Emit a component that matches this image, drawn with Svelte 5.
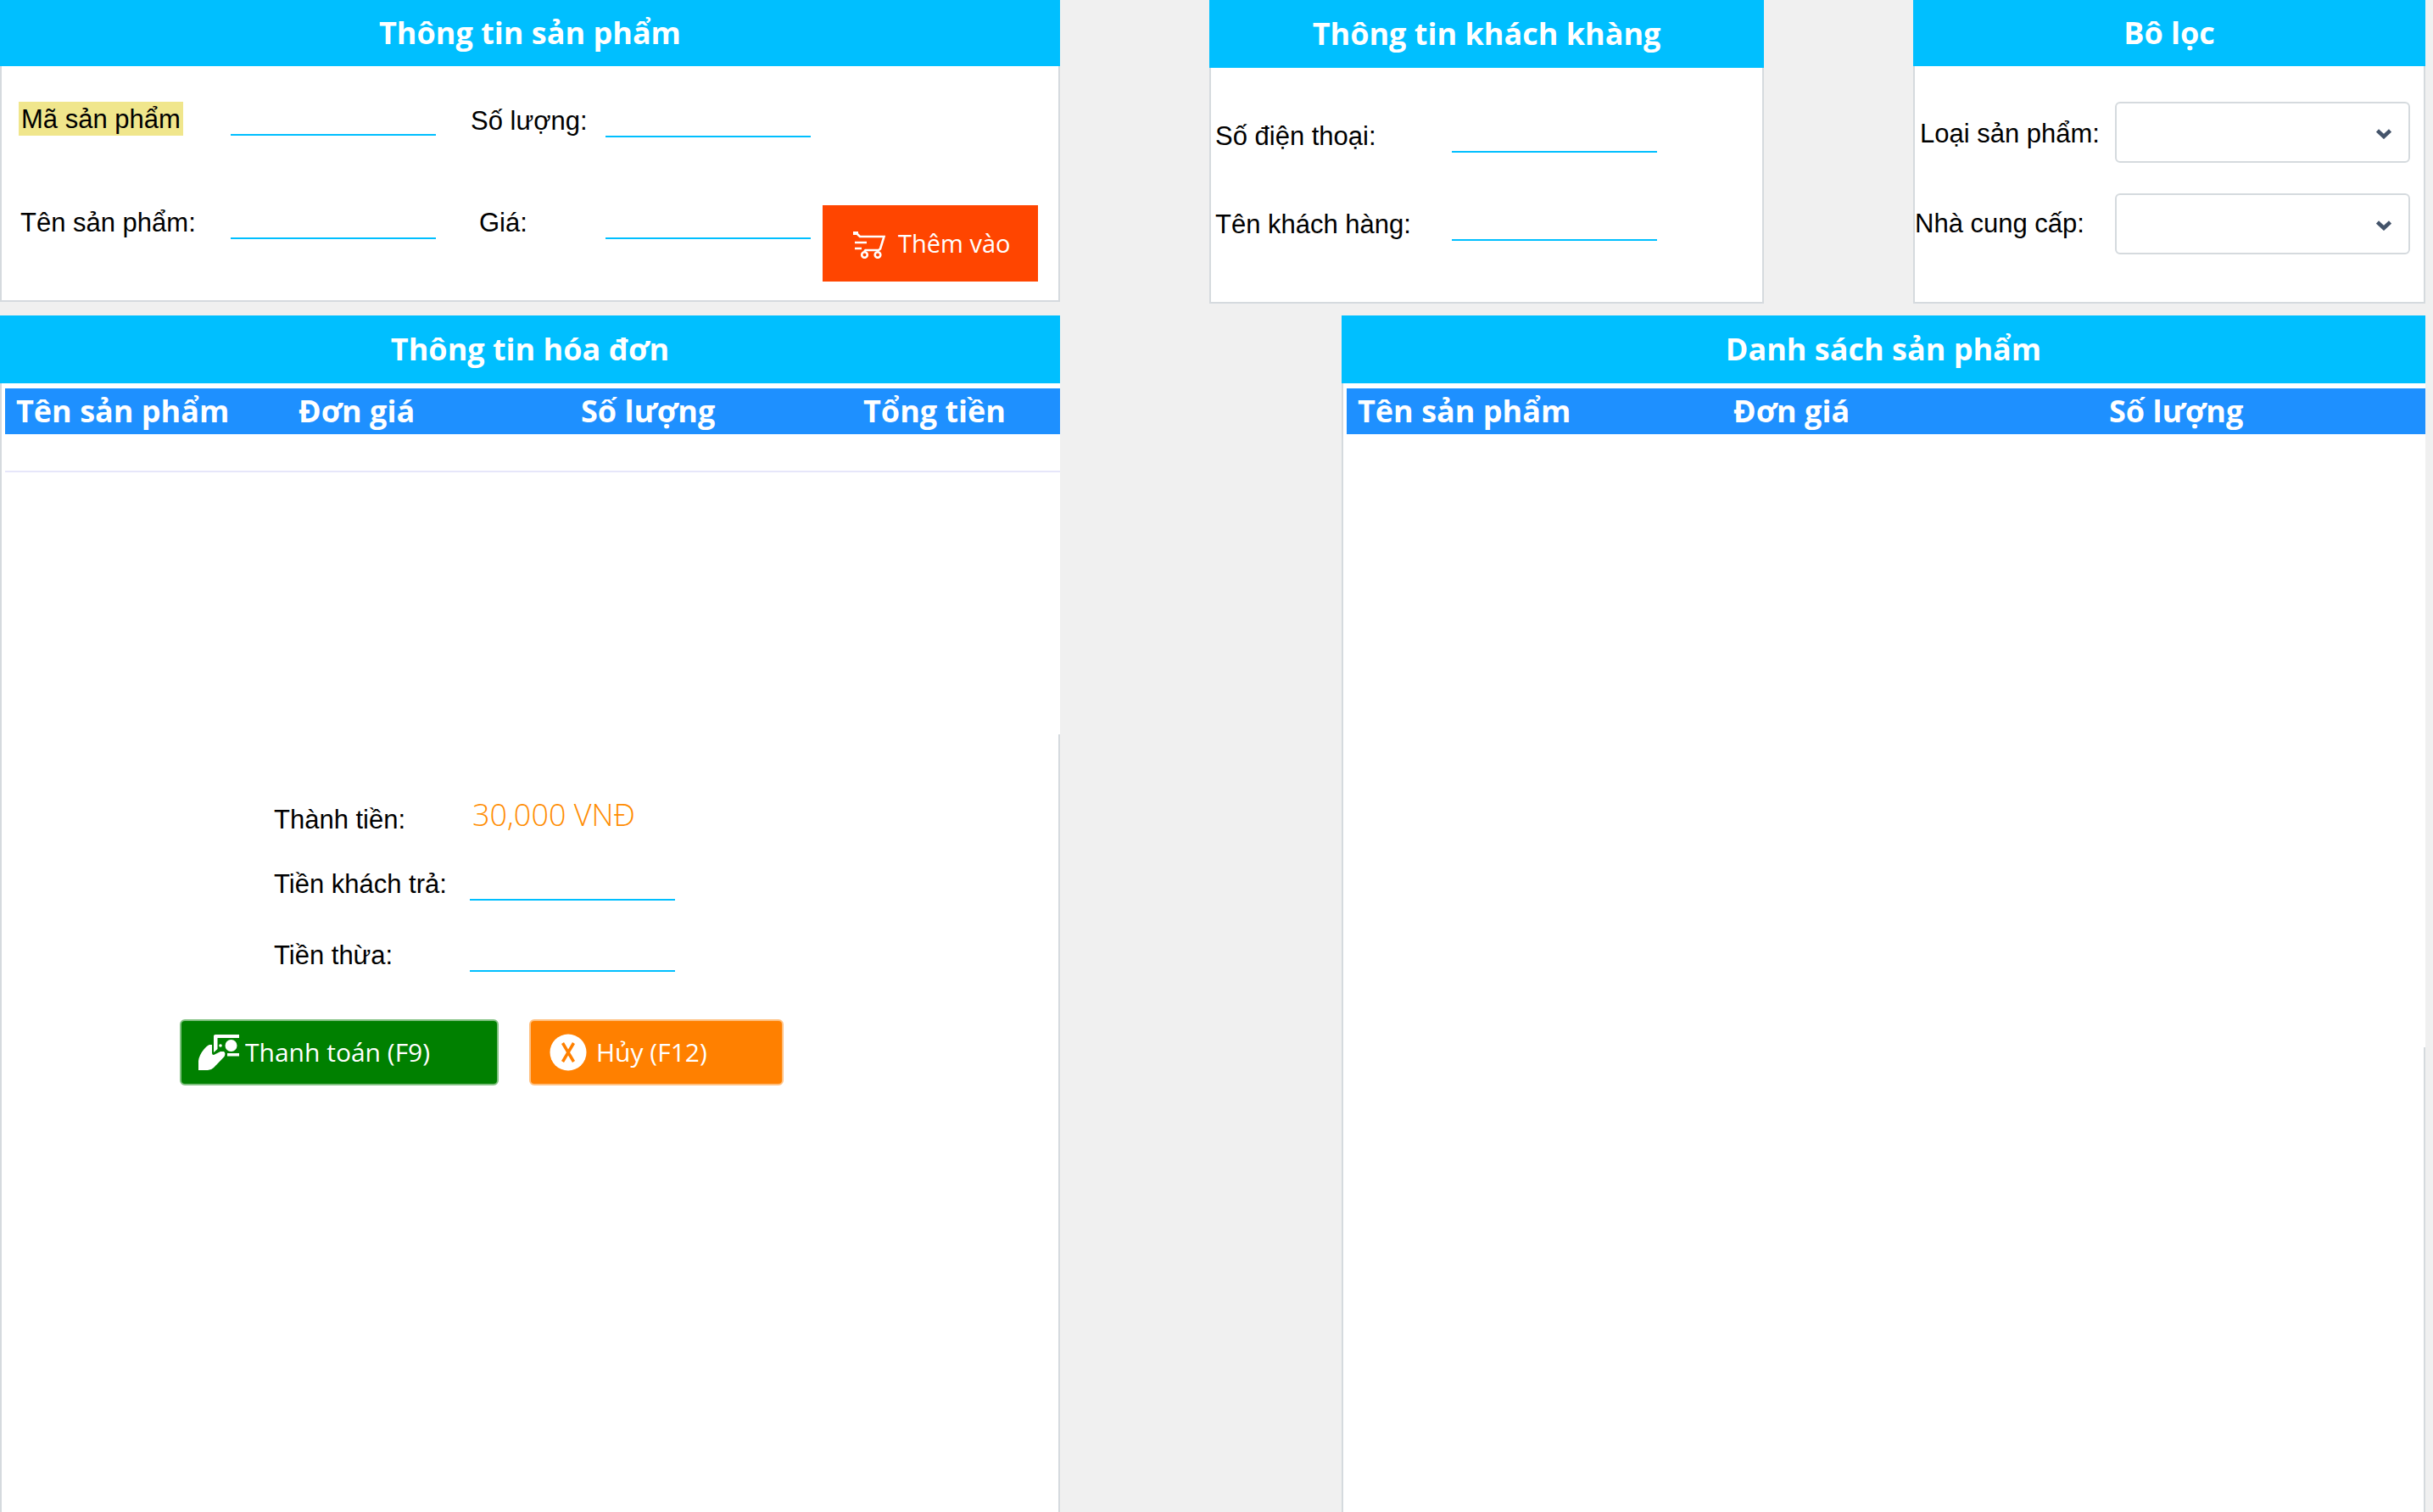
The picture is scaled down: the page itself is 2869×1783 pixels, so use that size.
<script>
  const billColumns = ['Tên sản phẩm', 'Đơn giá', 'Số lượng', 'Tổng tiền'];
  const productColumns = ['Tên sản phẩm', 'Đơn giá', 'Số lượng'];
</script>

{#snippet chevron()}
  <svg class="chevron" viewBox="0 0 18 12" aria-hidden="true">
    <path d="M1.5 2 9 9 16.500 2" fill="none" stroke="#44546a" stroke-width="4.500" />
  </svg>
{/snippet}

<main>
  <div class="top">
    <section class="card product">
      <h2>Thông tin sản phẩm</h2>
      <form class="body">
        <div class="fields">
          <div class="field">
            <label for="code"><mark>Mã sản phẩm</mark></label>
            <input id="code" type="text" />
          </div>
          <div class="field">
            <label for="name">Tên sản phẩm:</label>
            <input id="name" type="text" />
          </div>
        </div>
        <div class="fields amounts">
          <div class="field">
            <label for="quantity">Số lượng:</label>
            <input id="quantity" type="text" />
          </div>
          <div class="field price">
            <label for="price">Giá:</label>
            <input id="price" type="text" />
          </div>
        </div>
        <button type="button" class="add">
          <svg width="38" height="32" viewBox="0 0 38 32" fill="none" stroke="#fff" aria-hidden="true">
            <path d="M0 2h6" stroke-width="4" />
            <path d="M5 3 8 6H36.500L32 20.500 30 22H14.500L13 24" stroke-width="2.600" />
            <path d="M2 13H16M2 20H10" stroke-width="2.600" />
            <circle cx="13.500" cy="27.500" r="3.300" stroke-width="2.600" />
            <circle cx="29" cy="27.500" r="3.300" stroke-width="2.600" />
          </svg>
          Thêm vào
        </button>
      </form>
    </section>

    <section class="card customer">
      <h2>Thông tin khách khàng</h2>
      <form class="body">
        <div class="field">
          <label for="phone">Số điện thoại:</label>
          <input id="phone" type="text" />
        </div>
        <div class="field">
          <label for="customer">Tên khách hàng:</label>
          <input id="customer" type="text" />
        </div>
      </form>
    </section>

    <section class="card filter">
      <h2>Bô lọc</h2>
      <form class="body">
        <div class="choice">
          <label class="kind" for="kind">Loại sản phẩm:</label>
          <div class="select"><select id="kind"><option></option></select>{@render chevron()}</div>
        </div>
        <div class="choice">
          <label for="supplier">Nhà cung cấp:</label>
          <div class="select"><select id="supplier"><option></option></select>{@render chevron()}</div>
        </div>
      </form>
    </section>
  </div>

  <div class="bottom">
    <section class="card bill">
      <h2>Thông tin hóa đơn</h2>
      <div class="body">
        <div class="list">
          <table>
            <thead>
              <tr>{#each billColumns as column}<th>{column}</th>{/each}</tr>
            </thead>
            <tbody>
              <tr>{#each billColumns as column}<td></td>{/each}</tr>
            </tbody>
          </table>
        </div>
        <form class="payment">
          <div class="field total">
            <label for="total">Thành tiền:</label>
            <output id="total">30,000 VNĐ</output>
          </div>
          <div class="field paid">
            <label for="paid">Tiền khách trả:</label>
            <input id="paid" type="text" />
          </div>
          <div class="field">
            <label for="change">Tiền thừa:</label>
            <input id="change" type="text" />
          </div>
        </form>
        <div class="actions">
          <button type="button" class="pay">
            <svg width="48" height="42" viewBox="0 0 48 42" fill="#fff" aria-hidden="true">
              <path d="M18 1.500Q18 0 20 0H48V4H22.500V17L18 21Z" />
              <path d="M34 22H48V25.500H34Z" />
              <circle cx="26" cy="13" r="1.800" />
              <circle cx="38.500" cy="13" r="7" />
              <path d="M13 12H16V22Q16 24 18 24L26 20H30Q32.500 22 30.500 26L18 39Q15 42 11 42H0V31Q1 24 6 18Q10 13 13 12Z" />
            </svg>
            Thanh toán (F9)
          </button>
          <button type="button" class="cancel">
            <svg width="44" height="44" viewBox="0 0 44 44" aria-hidden="true">
              <circle cx="22" cy="22" r="21.500" fill="#fff" />
              <path d="M15.500 11 28.500 33M28.500 11 15.500 33" stroke="#ff8000" stroke-width="3.500" />
            </svg>
            Hủy (F12)
          </button>
        </div>
      </div>
    </section>

    <section class="card products">
      <h2>Danh sách sản phẩm</h2>
      <div class="body">
        <div class="list">
          <table>
            <thead>
              <tr>{#each productColumns as column}<th>{column}</th>{/each}</tr>
            </thead>
          </table>
        </div>
      </div>
    </section>
  </div>
</main>

<style>
  :global(body) {
    background: #f0f0f0;
  }
  main {
    box-sizing: border-box;
    min-height: 100vh;
    padding-right: 9px;
    display: flex;
    flex-direction: column;
    gap: 14px;
    color: #000;
    font: 31px/42px "Liberation Sans", Arial, sans-serif;
  }
  main * {
    box-sizing: border-box;
  }
  .top {
    display: grid;
    grid-template-columns: 1250fr 654fr 604fr;
    column-gap: 176px;
    align-items: start;
  }
  .bottom {
    flex: 1;
    display: grid;
    grid-template-columns: 1250fr 1278fr;
    column-gap: 332px;
  }
  .card {
    display: flex;
    flex-direction: column;
    min-width: 0;
  }
  h2 {
    margin: 0;
    background: #00bfff;
    color: #fff;
    text-align: center;
    font: bold 36px/78px "Open Sans", "Segoe UI", sans-serif;
  }
  .customer h2,
  .bottom h2 {
    line-height: 80px;
  }
  .body {
    flex: 1;
    background: #fff;
    border: 2px solid #d5dade;
    border-top: 0;
  }
  .bottom .body {
    border-bottom: 0;
  }
  .field {
    display: flex;
    align-items: flex-start;
    height: 40px;
  }
  input {
    width: 242px;
    height: 40px;
    padding: 0;
    border: 0;
    border-bottom: 2px solid #00bfff;
    background: none;
    font: inherit;
    outline: none;
  }
  button {
    display: flex;
    align-items: center;
    padding: 0;
    border: 0;
    color: #fff;
    font: 29px/40px "Open Sans", "Segoe UI", sans-serif;
    white-space: nowrap;
  }

  .product .body {
    display: flex;
    padding: 42px 24px 22px 20px;
  }
  .fields {
    display: flex;
    flex-direction: column;
    gap: 82px;
  }
  .fields label {
    width: 250px;
  }
  mark {
    display: block;
    width: fit-content;
    height: 40px;
    padding: 0 3px;
    background: #f0e68c;
    color: inherit;
  }
  .fields label:not(:has(mark)) {
    padding-left: 2px;
  }
  .amounts {
    padding: 2px 0 0 39px;
    gap: 80px;
  }
  .amounts label {
    width: 161px;
  }
  .price label:not(:has(mark)) {
    padding-left: 12px;
  }
  .add {
    width: 254px;
    height: 90px;
    margin: 122px 0 0 auto;
    padding-left: 36px;
    gap: 15px;
    background: #ff4500;
  }
  .add svg {
    margin-top: 4px;
  }

  .customer .body {
    display: flex;
    flex-direction: column;
    gap: 64px;
    padding: 60px 5px 72px;
  }
  .customer label {
    width: 279px;
  }

  .filter .body {
    display: flex;
    flex-direction: column;
    gap: 36px;
    padding: 42px 16px 56px 0;
  }
  .choice {
    display: flex;
    align-items: center;
    justify-content: space-between;
  }
  .kind {
    padding: 4px 0 0 6px;
  }
  .select {
    position: relative;
    width: 348px;
  }
  select {
    display: block;
    width: 100%;
    height: 72px;
    border: 2px solid #d5dade;
    border-radius: 6px;
    background: #fff;
    appearance: none;
    font: inherit;
  }
  .chevron {
    position: absolute;
    top: 32px;
    right: 22px;
    width: 18px;
    height: 12px;
    pointer-events: none;
  }

  .list {
    margin-right: -2px;
    padding: 6px 0 0 4px;
    background: #fff;
  }
  .bill .list {
    height: 414px;
  }
  .products .list {
    height: 783px;
  }
  table {
    width: 100%;
    border-collapse: collapse;
    table-layout: fixed;
  }
  th {
    width: 333px;
    height: 54px;
    padding: 0 0 0 13px;
    background: #1e90ff;
    color: #fff;
    text-align: left;
    font: bold 36px/54px "Open Sans", "Segoe UI", sans-serif;
    white-space: nowrap;
  }
  th:last-child {
    width: auto;
  }
  .products th:not(:last-child) {
    width: 443px;
  }
  td {
    height: 44px;
    padding: 0;
    border-bottom: 2px solid #e6e6fa;
  }

  .payment {
    padding: 80px 0 0 321px;
  }
  .payment label {
    width: 231px;
  }
  .total {
    margin-bottom: 36px;
  }
  .total output {
    padding-left: 3px;
    color: #ff8c00;
    font: 300 36px/30px "Open Sans", "Segoe UI", sans-serif;
  }
  .paid {
    margin-bottom: 44px;
  }
  .actions {
    display: flex;
    gap: 36px;
    padding: 56px 0 0 210px;
  }
  .actions button {
    height: 78px;
    border: 2px solid #80c080;
    border-radius: 6px;
    font-size: 30px;
  }
  .actions .pay {
    width: 376px;
    padding-left: 20px;
    gap: 7px;
    background: #008000;
  }
  .actions .cancel {
    width: 300px;
    padding-left: 22px;
    gap: 11px;
    border-color: #ffc080;
    background: #ff8000;
  }
</style>
